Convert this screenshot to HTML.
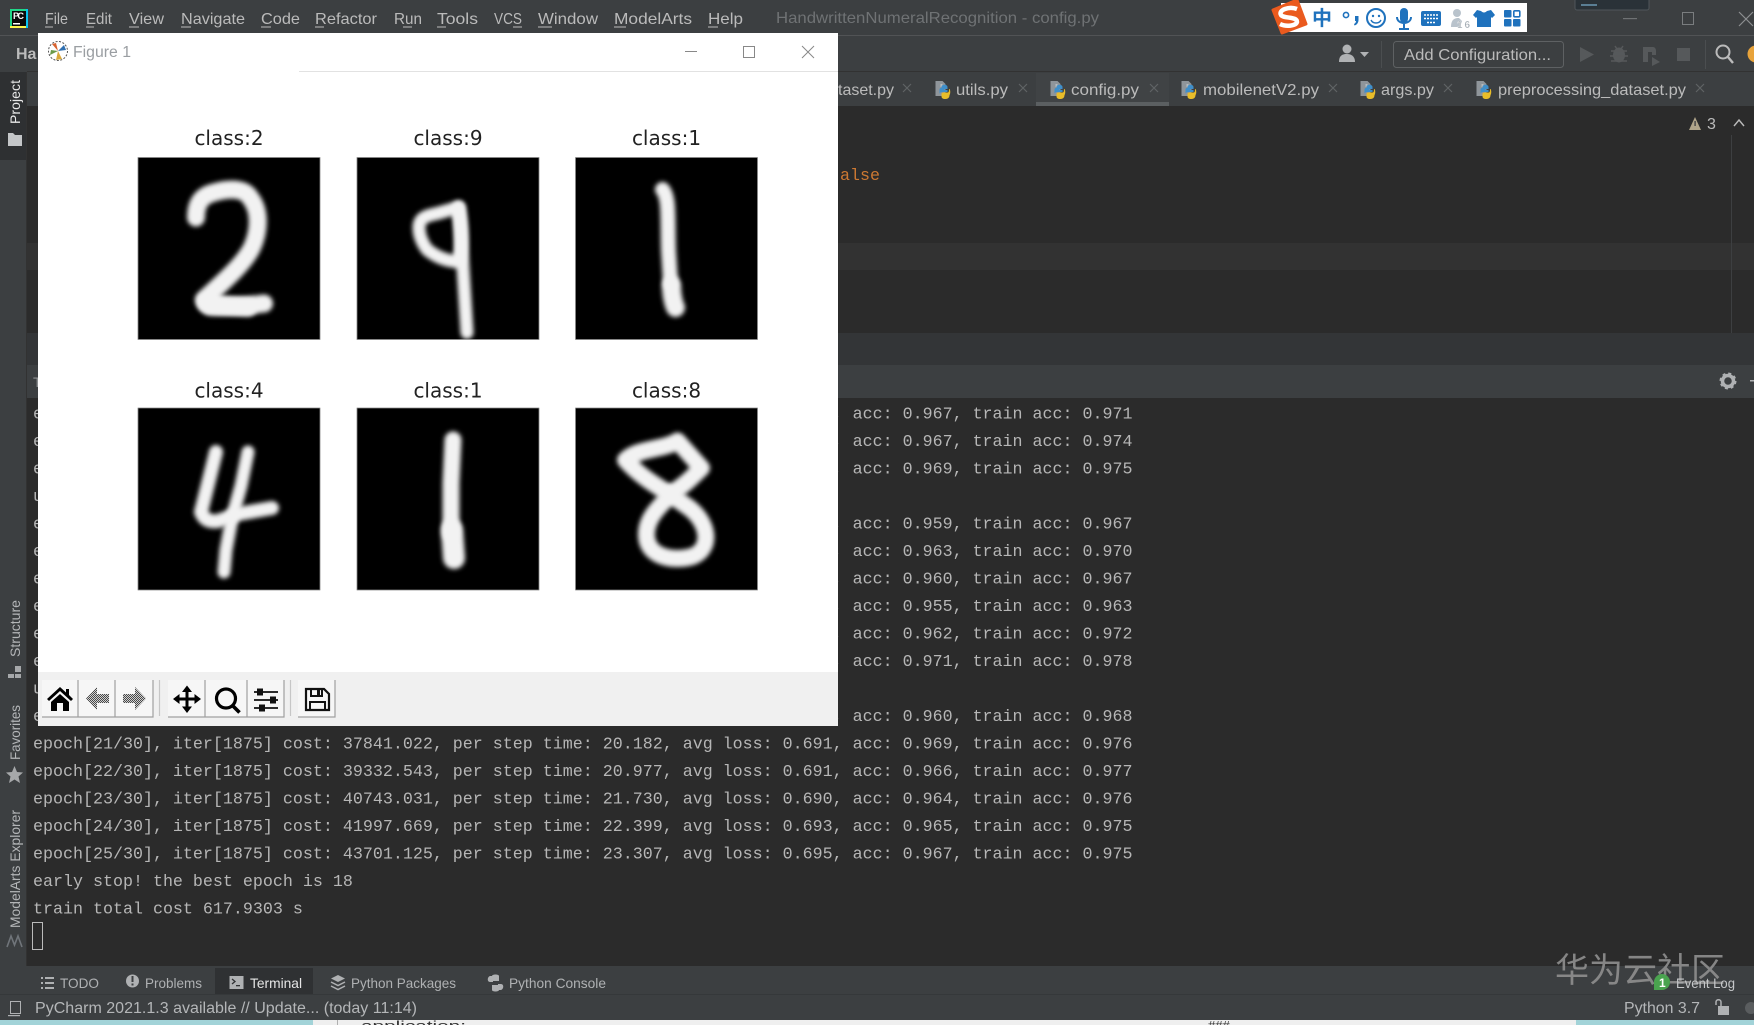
<!DOCTYPE html>
<html><head><meta charset="utf-8"><title>PyCharm</title>
<style>
html,body{margin:0;padding:0;background:#2b2b2b;width:1754px;height:1025px;overflow:hidden}
svg{display:block}
text{font-family:"Liberation Sans","Noto Sans CJK SC",sans-serif}
.m{font-family:"Liberation Mono",monospace;font-size:16.67px;fill:#b6b6b6;white-space:pre}
.menu{font-size:16px;fill:#bbbbbb}
.tab{font-size:16px;fill:#bbbbbb}
.x{stroke:#5f6365;stroke-width:1.2;fill:none}
.tt{font-family:"DejaVu Sans",sans-serif;font-size:20px;fill:#222;text-anchor:middle}
.tool{font-size:14px;fill:#afb1b3}
.side{font-size:14px;fill:#b4b6b8}
</style></head><body>
<svg width="1754" height="1025" viewBox="0 0 1754 1025" xmlns="http://www.w3.org/2000/svg">
<defs>
<filter id="b" filterUnits="userSpaceOnUse" x="0" y="0" width="182" height="182"><feGaussianBlur stdDeviation="2.3"/></filter>
<pattern id="dit" width="2" height="2" patternUnits="userSpaceOnUse"><rect width="2" height="2" fill="#d0d0d0"/><rect width="1" height="1" fill="#484848"/><rect x="1" y="1" width="1" height="1" fill="#484848"/></pattern>
<symbol id="py" viewBox="0 0 16 20" overflow="visible">
<path d="M1 1H8L11 4V16H1Z" fill="#8f959a"/>
<path d="M6 4H8V7H6Z" fill="#b6bcc0"/>
<path d="M7 7C7 4 13 4 13 7V9H10V10H13V12H8C6 12 5 13 5 14V10C5 8 6 8 7 8Z" fill="#3f8fca"/>
<path d="M15 9C16 10 16 14 15 15C15 17 14 19 11 19C8 19 7 18 7 16V14C7 13 8 12.500 9 12.500H13C14 12.500 14.500 12 14.500 9Z" fill="#e8bd2a"/>
</symbol>
</defs>

<!-- base -->
<rect width="1754" height="1025" fill="#2b2b2b"/>
<rect width="1754" height="35" fill="#3c3f41"/>
<rect y="35" width="1754" height="1" fill="#515355"/>
<rect y="36" width="1754" height="35" fill="#3c3f41"/>
<rect y="71" width="1754" height="35" fill="#3c3f41"/>
<rect y="71" width="1754" height="1" fill="#323232"/>
<rect x="27" y="106" width="1727" height="227" fill="#2b2b2b"/>
<rect x="27" y="243" width="1727" height="27" fill="#323232"/>
<rect x="1731" y="135" width="1" height="198" fill="#3d3f41"/>
<rect x="27" y="333" width="1727" height="32" fill="#333537"/>
<rect x="27" y="365" width="1727" height="33" fill="#3c3f41"/>
<rect x="27" y="398" width="1727" height="568" fill="#2b2b2b"/>

<!-- left stripe -->
<rect x="0" y="36" width="27" height="930" fill="#3c3f41"/>
<rect x="0" y="72" width="27" height="88" fill="#2e3032"/>
<rect x="26" y="72" width="1" height="894" fill="#323232"/>
<text class="side" transform="translate(20,124) rotate(-90)" textLength="44" style="fill:#e8e8e8">Project</text>
<path d="M8 133H13L15 135H22V146H8Z" fill="#c4c6c8"/>
<text class="side" transform="translate(20,657) rotate(-90)" textLength="57" lengthAdjust="spacingAndGlyphs">Structure</text>
<path d="M15 666H21V672H15ZM8 674H14V678H8ZM15 674H21V678H15Z" fill="#a6a8aa"/>
<text class="side" transform="translate(20,760) rotate(-90)" textLength="55" lengthAdjust="spacingAndGlyphs">Favorites</text>
<path d="M14.500 766L17 772L23 772.500L18.500 776.500L20 783L14.500 779.500L9 783L10.500 776.500L6 772.500L12 772Z" fill="#a6a8aa"/>
<text class="side" transform="translate(20,928) rotate(-90)" textLength="118" lengthAdjust="spacingAndGlyphs">ModelArts Explorer</text>
<path d="M7 947L11 936L14.500 945L18 936L22 947" stroke="#70757a" stroke-width="1.600" fill="none"/>

<!-- title bar -->
<rect x="10" y="9" width="18" height="19" fill="#0a0a0a"/>
<path d="M10 9H28V11H12V26H10Z" fill="#21d789"/><path d="M10 26H28V28H10Z" fill="#fcf84a"/><path d="M26 9H28V28H26Z" fill="#07c3f2"/>
<text x="13" y="19" font-size="9" font-weight="bold" fill="#fff" textLength="11">PC</text>
<rect x="13" y="23" width="7" height="1.500" fill="#fff"/>
<g>
<text class="menu" x="45" y="24" textLength="23" lengthAdjust="spacingAndGlyphs">File</text>
<text class="menu" x="86" y="24" textLength="26" lengthAdjust="spacingAndGlyphs">Edit</text>
<text class="menu" x="129" y="24" textLength="35" lengthAdjust="spacingAndGlyphs">View</text>
<text class="menu" x="181" y="24" textLength="64" lengthAdjust="spacingAndGlyphs">Navigate</text>
<text class="menu" x="261" y="24" textLength="39" lengthAdjust="spacingAndGlyphs">Code</text>
<text class="menu" x="315" y="24" textLength="62" lengthAdjust="spacingAndGlyphs">Refactor</text>
<text class="menu" x="394" y="24" textLength="28" lengthAdjust="spacingAndGlyphs">Run</text>
<text class="menu" x="437" y="24" textLength="41" lengthAdjust="spacingAndGlyphs">Tools</text>
<text class="menu" x="494" y="24" textLength="28" lengthAdjust="spacingAndGlyphs">VCS</text>
<text class="menu" x="538" y="24" textLength="60" lengthAdjust="spacingAndGlyphs">Window</text>
<text class="menu" x="614" y="24" textLength="78" lengthAdjust="spacingAndGlyphs">ModelArts</text>
<text class="menu" x="708" y="24" textLength="35" lengthAdjust="spacingAndGlyphs">Help</text>
</g>
<path d="M45 27h8M86 27h8M129 27h10M181 27h10M261 27h10M315 27h9M403 27h9M437 27h9M513 27h9M538 27h14M614 27h12M708 27h10" stroke="#bbbbbb" stroke-width="1"/>
<text x="776" y="23" font-size="16" fill="#6f7274" textLength="323" lengthAdjust="spacingAndGlyphs">HandwrittenNumeralRecognition - config.py</text>

<!-- Sogou bar -->
<rect x="1281" y="3" width="246" height="29" fill="#ffffff"/>
<path d="M1273 10L1297 0L1306 24L1282 33Z" fill="#ea5a1e" stroke="#ea5a1e" stroke-width="3" stroke-linejoin="round"/>
<path d="M1297 9C1289 6 1278 10 1281 15C1284 19 1297 16 1297 22C1296 26 1286 27 1280 24" stroke="#fff" stroke-width="4.500" fill="none"/>
<g fill="#1f72bd">
<text x="1312" y="25" font-size="20" font-weight="bold" style="font-family:'Noto Sans CJK SC',sans-serif" fill="#1f72bd">中</text>
<circle cx="1346" cy="15" r="2.600" fill="none" stroke="#1f72bd" stroke-width="1.600"/>
<path d="M1355 16h3.500v4c0 3-2 5-4 5.500l-.5-1.500c1.500-.8 2-2 2-3h-1Z"/>
<circle cx="1376" cy="18" r="9" fill="none" stroke="#1f72bd" stroke-width="2"/>
<circle cx="1373" cy="16" r="1.200"/><circle cx="1379" cy="16" r="1.200"/>
<path d="M1371 20c2 4 8 4 10 0" fill="none" stroke="#1f72bd" stroke-width="1.400"/>
<rect x="1400" y="8" width="8" height="15" rx="4"/>
<path d="M1397 17c0 8 14 8 14 0M1404 24v4M1399 29h10" fill="none" stroke="#1f72bd" stroke-width="2"/>
<rect x="1421" y="11" width="20" height="15" rx="2"/>
<path d="M1424 15h14M1424 18.500h14M1427 22.500h8" stroke="#fff" stroke-width="1.600" stroke-dasharray="2 1"/>
<circle cx="1457" cy="13" r="4" fill="#b9c3cc"/>
<path d="M1451 27c0-8 4-9 8-9l3 3-2 6Z" fill="#b9c3cc"/>
<text x="1457" y="28" font-size="10" font-weight="bold" fill="#9fa8b0" stroke="#fff" stroke-width=".3" textLength="13">16</text>
<path d="M1477 10l4 1c2 2 4 2 6 0l4-1 4 5-3 3-1-1v10h-14V17l-1 1-3-3Z"/>
<rect x="1504" y="10" width="7.500" height="7.500" rx="1"/><rect x="1504" y="19" width="7.500" height="7.500" rx="1"/><rect x="1513" y="19" width="7.500" height="7.500" rx="1"/><rect x="1513.800" y="10.800" width="6" height="6" rx="1" fill="none" stroke="#1f72bd" stroke-width="1.600"/>
</g>

<!-- small widget + window controls -->
<rect x="1575" y="-2" width="74" height="12" rx="2" fill="#2a3238" stroke="#50565a"/>
<rect x="1581" y="4" width="16" height="2" fill="#5a7e94"/>
<rect x="1623" y="18" width="14" height="1.200" fill="#6f7274"/>
<rect x="1682.500" y="12.500" width="11" height="12" fill="none" stroke="#7a7d7f" stroke-width="1"/>
<path d="M1739 12L1753 26M1753 12L1739 26" stroke="#8c8f91" stroke-width="1.200"/>

<!-- nav bar -->
<text x="16" y="59" font-size="16" font-weight="bold" fill="#bbbbbb">Ha</text>
<circle cx="1347" cy="49" r="4.500" fill="#b0b2b4"/><path d="M1339 62c0-7 4-8 8-8s8 2 8 8Z" fill="#b0b2b4"/>
<path d="M1360 52h9l-4.500 5Z" fill="#b0b2b4"/>
<rect x="1381" y="41" width="1" height="27" fill="#4b4e50"/>
<rect x="1393.500" y="41.500" width="170" height="26" rx="3" fill="#3c3f41" stroke="#5e6163"/>
<text x="1404" y="60" font-size="16" fill="#bbbbbb" textLength="147" lengthAdjust="spacingAndGlyphs">Add Configuration...</text>
<path d="M1580 47L1594 54.500L1580 62Z" fill="#56595b"/>
<ellipse cx="1619" cy="55" rx="6" ry="7.500" fill="#56595b"/><path d="M1611 51h16M1610 56h18M1611 61h16M1615 46l2 3M1623 46l-2 3" stroke="#56595b" stroke-width="1.500"/>
<path d="M1643 47h10c2 0 3 2 3 4v4h-4v-3h-4v10h-5Z" fill="#56595b"/><path d="M1652 57L1660 62L1652 66Z" fill="#56595b"/>
<rect x="1677" y="48" width="13" height="13" fill="#56595b"/>
<rect x="1705" y="40" width="1" height="29" fill="#4b4e50"/>
<circle cx="1723" cy="52" r="6.500" fill="none" stroke="#bbbbbb" stroke-width="2"/><path d="M1728 57L1733 63" stroke="#bbbbbb" stroke-width="2.400"/>
<circle cx="1756" cy="54" r="8.500" fill="#e8a33a"/>

<!-- tabs -->
<rect x="1036" y="73" width="133" height="33" fill="#404345"/>
<rect x="1036" y="102" width="133" height="4" fill="#5b5f61"/>
<text class="tab" x="838" y="95" textLength="56" lengthAdjust="spacingAndGlyphs">taset.py</text>
<path class="x" d="M903 84l8 8M911 84l-8 8"/>
<use href="#py" x="934" y="80" width="17" height="20"/>
<text class="tab" x="956" y="95" textLength="52" lengthAdjust="spacingAndGlyphs">utils.py</text>
<path class="x" d="M1019 84l8 8M1027 84l-8 8"/>
<use href="#py" x="1049" y="80" width="17" height="20"/>
<text class="tab" x="1071" y="95" textLength="68" lengthAdjust="spacingAndGlyphs">config.py</text>
<path class="x" d="M1150 84l8 8M1158 84l-8 8"/>
<use href="#py" x="1180" y="80" width="17" height="20"/>
<text class="tab" x="1203" y="95" textLength="116" lengthAdjust="spacingAndGlyphs">mobilenetV2.py</text>
<path class="x" d="M1329 84l8 8M1337 84l-8 8"/>
<use href="#py" x="1359" y="80" width="17" height="20"/>
<text class="tab" x="1381" y="95" textLength="53" lengthAdjust="spacingAndGlyphs">args.py</text>
<path class="x" d="M1444 84l8 8M1452 84l-8 8"/>
<use href="#py" x="1475" y="80" width="17" height="20"/>
<text class="tab" x="1498" y="95" textLength="188" lengthAdjust="spacingAndGlyphs">preprocessing_dataset.py</text>
<path class="x" d="M1696 84l8 8M1704 84l-8 8"/>

<!-- editor -->
<text class="m" x="840" y="180" style="fill:#cc7832">alse</text>
<path d="M1695 117L1701 130H1689Z" fill="#b0a58a"/><rect x="1694.400" y="121" width="1.400" height="5" fill="#444"/>
<text x="1707" y="129" font-size="16" fill="#bbbbbb">3</text>
<path d="M1734 126L1739 120L1744 126" stroke="#bbbbbb" stroke-width="1.400" fill="none"/>

<!-- terminal header gear -->
<text x="33" y="387" font-size="14" fill="#8f9193">T</text>
<circle cx="1728" cy="381" r="5.500" fill="none" stroke="#afb1b3" stroke-width="3.500"/>
<circle cx="1728" cy="381" r="7.500" fill="none" stroke="#afb1b3" stroke-width="2" stroke-dasharray="3 2.890"/>
<rect x="1750" y="380" width="4" height="1.500" fill="#afb1b3"/>

<!-- terminal text -->
<g>
<text class="m" xml:space="preserve" x="33" y="418.500">epoch[11/30], iter[1875] cost: 20644.312, per step time: 11.010, avg loss: 0.702, acc: 0.967, train acc: 0.971</text>
<text class="m" xml:space="preserve" x="33" y="446">epoch[12/30], iter[1875] cost: 22391.845, per step time: 11.942, avg loss: 0.698, acc: 0.967, train acc: 0.974</text>
<text class="m" xml:space="preserve" x="33" y="473.400">epoch[13/30], iter[1875] cost: 24102.776, per step time: 12.855, avg loss: 0.697, acc: 0.969, train acc: 0.975</text>
<text class="m" xml:space="preserve" x="33" y="500.900">update best ckpt</text>
<text class="m" xml:space="preserve" x="33" y="528.300">epoch[14/30], iter[1875] cost: 25870.490, per step time: 13.797, avg loss: 0.701, acc: 0.959, train acc: 0.967</text>
<text class="m" xml:space="preserve" x="33" y="556">epoch[15/30], iter[1875] cost: 27433.108, per step time: 14.631, avg loss: 0.699, acc: 0.963, train acc: 0.970</text>
<text class="m" xml:space="preserve" x="33" y="583.500">epoch[16/30], iter[1875] cost: 29120.551, per step time: 15.531, avg loss: 0.701, acc: 0.960, train acc: 0.967</text>
<text class="m" xml:space="preserve" x="33" y="611">epoch[17/30], iter[1875] cost: 30766.024, per step time: 16.409, avg loss: 0.705, acc: 0.955, train acc: 0.963</text>
<text class="m" xml:space="preserve" x="33" y="638.500">epoch[18/30], iter[1875] cost: 32518.337, per step time: 17.343, avg loss: 0.697, acc: 0.962, train acc: 0.972</text>
<text class="m" xml:space="preserve" x="33" y="666">epoch[19/30], iter[1875] cost: 34204.916, per step time: 18.243, avg loss: 0.692, acc: 0.971, train acc: 0.978</text>
<text class="m" xml:space="preserve" x="33" y="693.500">update best ckpt</text>
<text class="m" xml:space="preserve" x="33" y="721">epoch[20/30], iter[1875] cost: 36017.283, per step time: 19.209, avg loss: 0.694, acc: 0.960, train acc: 0.968</text>
<text class="m" xml:space="preserve" x="33" y="748.500">epoch[21/30], iter[1875] cost: 37841.022, per step time: 20.182, avg loss: 0.691, acc: 0.969, train acc: 0.976</text>
<text class="m" xml:space="preserve" x="33" y="776">epoch[22/30], iter[1875] cost: 39332.543, per step time: 20.977, avg loss: 0.691, acc: 0.966, train acc: 0.977</text>
<text class="m" xml:space="preserve" x="33" y="803.500">epoch[23/30], iter[1875] cost: 40743.031, per step time: 21.730, avg loss: 0.690, acc: 0.964, train acc: 0.976</text>
<text class="m" xml:space="preserve" x="33" y="831">epoch[24/30], iter[1875] cost: 41997.669, per step time: 22.399, avg loss: 0.693, acc: 0.965, train acc: 0.975</text>
<text class="m" xml:space="preserve" x="33" y="858.500">epoch[25/30], iter[1875] cost: 43701.125, per step time: 23.307, avg loss: 0.695, acc: 0.967, train acc: 0.975</text>
<text class="m" xml:space="preserve" x="33" y="886">early stop! the best epoch is 18</text>
<text class="m" xml:space="preserve" x="33" y="913.500">train total cost 617.9303 s</text>
</g>
<rect x="32.500" y="922.500" width="10" height="27" fill="none" stroke="#bbbbbb" stroke-width="1"/>

<!-- bottom tool bar -->
<rect y="966" width="1754" height="28" fill="#3c3f41"/>
<rect y="994" width="1754" height="1" fill="#35383a"/>
<rect y="995" width="1754" height="25" fill="#3c3f41"/>
<rect x="215" y="968" width="98" height="26" fill="#2f3133"/>
<path d="M41 977h2v2h-2zM45 977h9v2h-9zM41 982h2v2h-2zM45 982h9v2h-9zM41 987h2v2h-2zM45 987h9v2h-9z" fill="#afb1b3"/>
<text class="tool" x="60" y="988" textLength="39" lengthAdjust="spacingAndGlyphs">TODO</text>
<circle cx="132.500" cy="981" r="6.500" fill="#afb1b3"/><rect x="131.500" y="976" width="2" height="6" fill="#3c3f41"/><rect x="131.500" y="983.500" width="2" height="2" fill="#3c3f41"/>
<text class="tool" x="145" y="988" textLength="57" lengthAdjust="spacingAndGlyphs">Problems</text>
<rect x="229.500" y="976" width="14" height="13" fill="#afb1b3"/><path d="M232 979l3 2.500-3 2.500" stroke="#2f3133" stroke-width="1.300" fill="none"/><rect x="236" y="985" width="4" height="1.300" fill="#2f3133"/>
<text class="tool" x="250" y="988" textLength="52" lengthAdjust="spacingAndGlyphs" style="fill:#e6e6e6">Terminal</text>
<path d="M338 975l7 3.500-7 3.500-7-3.500Z" fill="#afb1b3"/><path d="M331 982l7 3.500 7-3.500M331 986l7 3.500 7-3.500" stroke="#afb1b3" stroke-width="1.500" fill="none"/>
<text class="tool" x="351" y="988" textLength="105" lengthAdjust="spacingAndGlyphs">Python Packages</text>
<path d="M492 976c0-2 7-2 7 0v5h-6v1h-3c-3 0-3-5 0-6h2Z" fill="#afb1b3"/><path d="M499 990c0 2-7 2-7 0v-5h6v-1h3c3 0 3 5 0 6h-2Z" fill="#afb1b3"/>
<text class="tool" x="509" y="988" textLength="97" lengthAdjust="spacingAndGlyphs">Python Console</text>

<!-- status bar -->
<rect x="10.500" y="1001.500" width="10" height="12" fill="none" stroke="#afb1b3"/><rect x="8" y="1015" width="12" height="1.200" fill="#afb1b3"/>
<text x="35" y="1013" font-size="15.500" fill="#b4b6b8" textLength="382" lengthAdjust="spacingAndGlyphs">PyCharm 2021.1.3 available // Update... (today 11:14)</text>
<text x="1624" y="1013" font-size="15.500" fill="#b4b6b8" textLength="76" lengthAdjust="spacingAndGlyphs">Python 3.7</text>
<rect x="1718" y="1006" width="11" height="9" fill="#afb1b3"/><path d="M1716 1005v-3c0-3 5-3 5 0v4" stroke="#afb1b3" stroke-width="1.500" fill="none"/>
<circle cx="1751" cy="1008" r="6" fill="#5a5d5f"/>

<!-- desktop strip -->
<rect y="1020" width="313" height="5" fill="#a2d3d8"/>
<rect x="313" y="1020" width="1263" height="5" fill="#efefef"/>
<rect x="337" y="1020" width="1" height="5" fill="#b0b0b0"/>
<rect x="1576" y="1020" width="178" height="5" fill="#a2d3d8"/>
<text x="361" y="1030" font-size="13" fill="#333" textLength="105" lengthAdjust="spacingAndGlyphs">application:</text>
<text x="1208" y="1030" font-size="13" fill="#333">###</text>

<!-- watermark and event log -->
<text x="1555" y="982" font-size="34" fill="#8f8f8f" fill-opacity=".9" style="font-family:'Noto Sans CJK SC',sans-serif" textLength="170">华为云社区</text>
<path d="M1654 982a8 8 0 1 1 8 8h-8Z" fill="#4aa34f"/>
<text x="1659" y="987" font-size="12" font-weight="bold" fill="#fff">1</text>
<text class="tool" x="1676" y="988" textLength="59" lengthAdjust="spacingAndGlyphs" style="fill:#c5c7c9">Event Log</text>

<!-- Figure window -->
<rect x="38" y="33" width="800" height="693" fill="#ffffff"/>
<rect x="299" y="71" width="539" height="1" fill="#e2e2e2"/>
<circle cx="58" cy="51" r="9.500" fill="none" stroke="#555" stroke-width="1" stroke-dasharray="2 1.500"/>
<path d="M58 51L52 44L56 43Z" fill="#d8622f"/><path d="M58 51L64 45L66 50Z" fill="#2f6fb0"/><path d="M58 51L62 59L56 60Z" fill="#d9a83a"/><path d="M58 51L50 55L51 50Z" fill="#6a9a4a"/>
<text x="73" y="57" font-size="15.500" fill="#9a9ea2" textLength="58" lengthAdjust="spacingAndGlyphs">Figure 1</text>
<rect x="685" y="51" width="12" height="1" fill="#888"/>
<rect x="743.500" y="46.500" width="11" height="11" fill="none" stroke="#888"/>
<path d="M802 46L814 58M814 46L802 58" stroke="#888" stroke-width="1"/>

<text class="tt" x="229" y="145">class:2</text>
<text class="tt" x="448" y="145">class:9</text>
<text class="tt" x="666.500" y="145">class:1</text>
<text class="tt" x="229" y="397.500">class:4</text>
<text class="tt" x="448" y="397.500">class:1</text>
<text class="tt" x="666.500" y="397.500">class:8</text>

<!-- digit images -->
<g fill="none" stroke="#f2f2f2" stroke-linecap="round" stroke-linejoin="round">
<g transform="translate(138,157.500)">
<rect width="182" height="182" fill="#000" stroke="#888" stroke-width=".8"/>
<path filter="url(#b)" stroke-width="18" d="M58 60C58 45 64 38 76 35C90 31 106 30 112 40C122 52 122 72 114 90C106 106 88 122 66 142L72 149C90 150 110 148 126 146"/>
<path filter="url(#b)" stroke-width="18" d="M68 146L110 150"/>
</g>
<g transform="translate(357,157.500)">
<rect width="182" height="182" fill="#000" stroke="#888" stroke-width=".8"/>
<path filter="url(#b)" stroke-width="13" d="M62 70C62 60 70 58 80 56L101 50C106 70 105 90 102 104C90 104 80 100 70 92C65 85 62 78 62 70Z"/>
<path filter="url(#b)" stroke-width="13" d="M102 50L106 110L110 175"/>
</g>
<g transform="translate(575.500,157.500)">
<rect width="182" height="182" fill="#000" stroke="#888" stroke-width=".8"/>
<path filter="url(#b)" stroke-width="15" d="M87 32C94 40 92 60 93 93L95 125"/>
<path filter="url(#b)" stroke-width="19" d="M96 128C96 140 99 148 100 150"/>
</g>
<g transform="translate(138,408)">
<rect width="182" height="182" fill="#000" stroke="#888" stroke-width=".8"/>
<path filter="url(#b)" stroke-width="14" d="M78 44L71 72L63 104C66 112 72 114 80 113L100 106L134 100"/>
<path filter="url(#b)" stroke-width="13" d="M110 44L103 78L94 110L88 142L86 164"/>
</g>
<g transform="translate(357,408)">
<rect width="182" height="182" fill="#000" stroke="#888" stroke-width=".8"/>
<path filter="url(#b)" stroke-width="17" d="M96 32L94 75L94 125"/>
<path filter="url(#b)" stroke-width="22" d="M95 122L97 150"/>
</g>
<g transform="translate(575.500,408)">
<rect width="182" height="182" fill="#000" stroke="#888" stroke-width=".8"/>
<path filter="url(#b)" stroke-width="17" d="M50 52C62 40 88 42 102 33L126 60C116 70 106 80 94 86C78 76 62 66 50 52Z"/>
<path filter="url(#b)" stroke-width="17" d="M94 88C82 100 70 112 71 128C72 150 100 154 118 148C136 140 134 116 114 100L94 86"/>
</g>
</g>

<!-- Figure toolbar -->
<rect x="38" y="672" width="800" height="54" fill="#f0f0f0"/>
<g fill="#f6f6f6" stroke="none">
<rect x="42" y="680" width="36" height="37"/><rect x="78" y="680" width="37" height="37"/><rect x="115" y="680" width="38" height="37"/>
<rect x="168" y="680" width="37" height="37"/><rect x="205" y="680" width="42" height="37"/><rect x="247" y="680" width="37" height="37"/>
<rect x="298" y="680" width="37" height="37"/>
</g>
<path d="M78 680v37H42M115 680v37H78M153 680v37H115M205 680v37H168M247 680v37H205M284 680v37H247M335 680v37H298" stroke="#9f9f9f" stroke-width="1.200" fill="none"/>
<path d="M159.500 680v36M290.500 680v36" stroke="#c6c6c6" stroke-width="1.200"/>
<!-- home -->
<path d="M47 699L60 687L66 692.500V689H69V695L73 699L71 701L60 691L49 701Z" fill="#000"/>
<path d="M51 702L60 694L69 702V711H63V703H57V711H51Z" fill="#000"/>
<!-- back / forward -->
<path d="M86 698.500L97 687V694H109V703H97V710Z" fill="url(#dit)"/>
<path d="M146 698.500L135 687V694H123V703H135V710Z" fill="url(#dit)"/>
<!-- move -->
<path d="M187 690V708M178 699H196" stroke="#000" stroke-width="3"/>
<path d="M187 685.500L192 692H182ZM187 713L192 706.500H182ZM173 699L179.500 694V704ZM201 699L194.500 694V704Z" fill="#000"/>
<!-- zoom -->
<circle cx="226" cy="698.500" r="9.500" fill="none" stroke="#000" stroke-width="3.200"/>
<path d="M232.500 705.500L239.500 712.500" stroke="#000" stroke-width="3.600"/>
<!-- sliders -->
<path d="M254 692H278M254 700H278M254 708H278" stroke="#111" stroke-width="1.800"/>
<rect x="257" y="688.500" width="6" height="7" fill="#111"/><rect x="270" y="696.500" width="6" height="7" fill="#111"/><rect x="259" y="704.500" width="6" height="7" fill="#111"/>
<!-- save -->
<path d="M306 689H324L329 694V710H306Z" fill="#f6f6f6" stroke="#111" stroke-width="2.200"/>
<path d="M311 689V696H322V689" fill="none" stroke="#111" stroke-width="2"/>
<rect x="317" y="690" width="3" height="5" fill="#111"/>
<path d="M310 710V702H325V710" fill="none" stroke="#111" stroke-width="2"/>
</svg>
</body></html>
